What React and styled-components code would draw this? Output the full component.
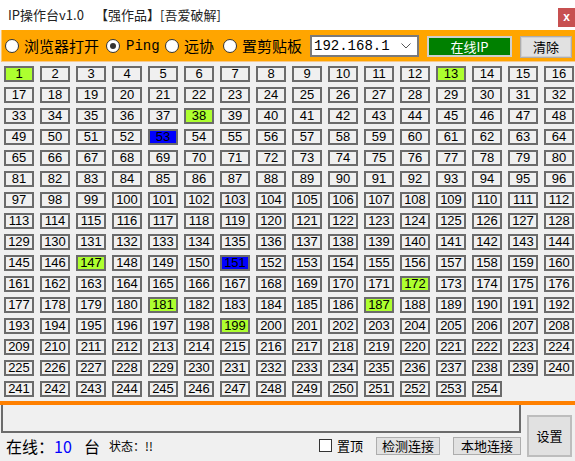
import React from 'react';
import styled, { createGlobalStyle } from 'styled-components';

const GlobalStyle = createGlobalStyle`
  html, body {
    margin: 0;
    padding: 0;
    background: #f0f0f0;
  }
  body {
    font-family: "Noto Sans CJK SC", "Liberation Sans", sans-serif;
    color: #000;
  }
`

const CJK = `"Noto Sans CJK SC", "Liberation Sans", sans-serif`;
const MONO = `"Liberation Mono", "Noto Sans CJK SC", monospace`;

const Window = styled.div`
  width: 575px;
  height: 461px;
  overflow: hidden;
  display: flex;
  flex-direction: column;
  background: #f0f0f0;
  position: relative;
`

const TitleBar = styled.div`
  height: 30px;
  flex: none;
  background: #fff;
  display: flex;
  align-items: flex-start;
  padding-left: 8px;
  font-family: ${CJK};
  font-size: 13px;
  line-height: 30px;
  color: #222;
`
const TitleName = styled.span`
  width: 87px;
`
const CloseButton = styled.div`
  margin-left: auto;
  margin-top: 8px;
  width: 17px;
  height: 19px;
  background: #c75050;
  color: #fff;
  font-family: "Liberation Sans", sans-serif;
  font-weight: bold;
  font-size: 12px;
  line-height: 18px;
  text-align: center;
`

const OptionBar = styled.div`
  height: 31px;
  flex: none;
  margin-left: 1px;
  background: #ffa500;
  border-left: 1px solid #ffc66a;
  border-bottom: 1px solid #f9c98a;
  display: flex;
  align-items: center;
  padding-left: 3px;
`

const RadioItem = styled.label`
  width: ${props => props.$width}px;
  flex: none;
  display: flex;
  align-items: center;
  font-family: ${props => props.$mono ? MONO : CJK};
  font-size: ${props => props.$mono ? 14 : 15}px;
  white-space: nowrap;
`
const RadioCircle = styled.span`
  width: 12px;
  height: 12px;
  flex: none;
  border-radius: 50%;
  border: 1px solid #333;
  background: #fff;
  margin-right: ${props => props.$mono ? 6 : 5}px;
  display: flex;
  align-items: center;
  justify-content: center;
  &::after {
    content: '';
    display: ${props => props.$checked ? 'block' : 'none'};
    width: 6px;
    height: 6px;
    border-radius: 50%;
    background: #333;
  }
`

const Combo = styled.div`
  width: 103px;
  height: 18px;
  flex: none;
  margin-top: 1px;
  border: 2px solid #7a7a7a;
  background: #fff;
  display: flex;
  align-items: center;
  padding-left: 2px;
  font-family: ${MONO};
  font-size: 14px;
`
const ComboArrow = styled.svg`
  margin-left: auto;
  margin-right: 6px;
`

const OnlineButton = styled.div`
  margin-left: 8px;
  width: 81px;
  height: 17px;
  flex: none;
  margin-top: 2px;
  border: 2px solid #cfcfcf;
  background: #008000;
  color: #fff;
  font-family: ${CJK};
  font-size: 13px;
  line-height: 17px;
  text-align: center;
`
const ClearButton = styled.div`
  margin-left: 9px;
  width: 48px;
  height: 18px;
  flex: none;
  margin-top: 2px;
  border: 1px solid #cfcfcf;
  outline: 1px solid #adadad;
  background: #e1e1e1;
  font-family: ${CJK};
  font-size: 13px;
  line-height: 18px;
  text-align: center;
`

const Grid = styled.div`
  display: grid;
  grid-template-columns: repeat(16, 30px);
  grid-auto-rows: 16px;
  column-gap: 6px;
  row-gap: 5px;
  padding: 4px 0 0 4px;
  height: 335px;
  flex: none;
`
const Cell = styled.div`
  box-sizing: border-box;
  border: 2px solid #6b6b6b;
  background: ${props => props.$state === 'on' ? '#adff2f' : props.$state === 'blue' ? '#0000ff' : '#f0f0f0'};
  font-family: "Liberation Sans", sans-serif;
  font-size: 13px;
  line-height: 12px;
  text-align: center;
  color: #000;
`

const OrangeLine = styled.div`
  height: 4px;
  flex: none;
  background: #ff8000;
`

const Footer = styled.div`
  display: flex;
  flex: 1;
`
const FooterLeft = styled.div`
  width: 521px;
  flex: none;
  display: flex;
  flex-direction: column;
`
const LogBox = styled.div`
  height: 26px;
  margin-left: 1px;
  border: 2px solid #6b6b6b;
  border-top: none;
  background: #f0f0f0;
`
const StatusRow = styled.div`
  display: flex;
  align-items: center;
  height: 25px;
  padding-left: 6px;
`
const BigText = styled.span`
  font-family: ${CJK};
  font-size: 16px;
  color: ${props => props.$blue ? '#0000ff' : '#000'};
  width: ${props => props.$width ? props.$width + 'px' : 'auto'};
  flex: none;
  white-space: nowrap;
`
const SmallText = styled.span`
  font-family: ${CJK};
  font-size: 12px;
  flex: none;
`
const CheckItem = styled.label`
  margin-left: auto;
  display: flex;
  align-items: center;
  font-family: ${CJK};
  font-size: 13px;
`
const CheckBox = styled.span`
  width: 11px;
  height: 11px;
  border: 1px solid #333;
  background: #fff;
  margin-right: 5px;
`
const ActionButton = styled.div`
  margin-left: ${props => props.$gap}px;
  width: ${props => props.$width}px;
  height: 18px;
  box-sizing: border-box;
  border: 1px solid #adadad;
  background: #e1e1e1;
  font-family: ${CJK};
  font-size: 13px;
  line-height: 16px;
  text-align: center;
  flex: none;
`
const SettingsButton = styled.div`
  margin: 10px 0 0 6px;
  width: 45px;
  height: 42px;
  box-sizing: border-box;
  border: 2px solid #bdbdbd;
  background: #e1e1e1;
  font-family: ${CJK};
  font-size: 13px;
  line-height: 38px;
  text-align: center;
`

const green = [1, 13, 38, 147, 172, 181, 187, 199];
const blue = [53, 151];

const numbers = Array.from({ length: 254 }, (_, i) => i + 1);

const App = function() {
  return (
    <Window>
      <GlobalStyle />
      <TitleBar>
        <TitleName>IP操作台v1.0</TitleName>
        <span>【强作品】[吾爱破解]</span>
        <CloseButton>x</CloseButton>
      </TitleBar>
      <OptionBar>
        <RadioItem $width={101}><RadioCircle />浏览器打开</RadioItem>
        <RadioItem $width={59} $mono><RadioCircle $checked $mono />Ping</RadioItem>
        <RadioItem $width={58}><RadioCircle />远协</RadioItem>
        <RadioItem $width={87}><RadioCircle />置剪贴板</RadioItem>
        <Combo>
          192.168.1
          <ComboArrow width="10" height="6" viewBox="0 0 10 6">
            <path d="M0.5 0.5 L5 5 L9.5 0.5" fill="none" stroke="#555" strokeWidth="1" />
          </ComboArrow>
        </Combo>
        <OnlineButton>在线IP</OnlineButton>
        <ClearButton>清除</ClearButton>
      </OptionBar>
      <Grid>
        {numbers.map(n => (
          <Cell key={n} $state={green.includes(n) ? 'on' : blue.includes(n) ? 'blue' : 'off'}>{n}</Cell>
        ))}
      </Grid>
      <OrangeLine />
      <Footer>
        <FooterLeft>
          <LogBox />
          <StatusRow>
            <BigText>在线：</BigText>
            <BigText $blue $width={30}>10</BigText>
            <BigText $width={25}>台</BigText>
            <SmallText>状态：!!</SmallText>
            <CheckItem><CheckBox />置顶</CheckItem>
            <ActionButton $gap={13} $width={64}>检测连接</ActionButton>
            <ActionButton $gap={13} $width={68}>本地连接</ActionButton>
          </StatusRow>
        </FooterLeft>
        <SettingsButton>设置</SettingsButton>
      </Footer>
    </Window>
  );
};

export default App;
